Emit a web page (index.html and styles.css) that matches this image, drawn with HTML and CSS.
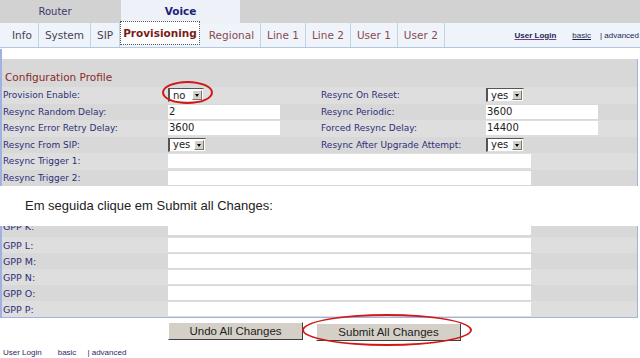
FILE: index.html
```html
<!DOCTYPE html>
<html lang="pt">
<head>
    <meta charset="UTF-8">
    <title>Provisioning</title>
    <link rel="stylesheet" href="styles.css">
</head>
<body>

    <!-- Main tabs -->
    <div class="main-tabs">
        <div class="main-tab">Router</div>
        <div class="main-tab active">Voice</div>
    </div>

    <!-- Sub tabs + mode links -->
    <div class="sub-bar">
        <nav class="sub-tabs">
            <span class="sub-tab dark">Info</span>
            <span class="sub-tab dark">System</span>
            <span class="sub-tab dark">SIP</span>
            <span class="sub-tab current">Provisioning</span>
            <span class="sub-tab">Regional</span>
            <span class="sub-tab">Line 1</span>
            <span class="sub-tab">Line 2</span>
            <span class="sub-tab">User 1</span>
            <span class="sub-tab">User 2</span>
        </nav>
        <div class="mode-links">
            <a href="#" class="login">User Login</a>
            <a href="#">basic</a>
            <span>| advanced</span>
        </div>
    </div>

    <div class="strip"></div>

    <section class="panel">
        <h3 class="section-title">Configuration Profile</h3>

        <div class="row">
            <label>Provision Enable:</label>
            <div class="cell">
                <span class="select narrow">no<i class="arrow"></i></span>
                <span class="ring ring-small"></span>
            </div>
            <label>Resync On Reset:</label>
            <div class="cell"><span class="select">yes<i class="arrow"></i></span></div>
        </div>
        <div class="row">
            <label>Resync Random Delay:</label>
            <div class="cell"><span class="field">2</span></div>
            <label>Resync Periodic:</label>
            <div class="cell"><span class="field">3600</span></div>
        </div>
        <div class="row">
            <label>Resync Error Retry Delay:</label>
            <div class="cell"><span class="field">3600</span></div>
            <label>Forced Resync Delay:</label>
            <div class="cell"><span class="field">14400</span></div>
        </div>
        <div class="row">
            <label>Resync From SIP:</label>
            <div class="cell"><span class="select">yes<i class="arrow"></i></span></div>
            <label>Resync After Upgrade Attempt:</label>
            <div class="cell"><span class="select">yes<i class="arrow"></i></span></div>
        </div>
        <div class="row wide">
            <label>Resync Trigger 1:</label>
            <div class="cell"><span class="field long"></span></div>
        </div>
        <div class="row wide">
            <label>Resync Trigger 2:</label>
            <div class="cell"><span class="field long"></span></div>
        </div>
    </section>

    <p class="caption">Em seguida clique em Submit all Changes:</p>

    <section class="panel bottom">
        <div class="row wide cut">
            <label>GPP K:</label>
            <div class="cell"><span class="field long"></span></div>
        </div>
        <div class="row wide">
            <label>GPP L:</label>
            <div class="cell"><span class="field long"></span></div>
        </div>
        <div class="row wide">
            <label>GPP M:</label>
            <div class="cell"><span class="field long"></span></div>
        </div>
        <div class="row wide">
            <label>GPP N:</label>
            <div class="cell"><span class="field long"></span></div>
        </div>
        <div class="row wide">
            <label>GPP O:</label>
            <div class="cell"><span class="field long"></span></div>
        </div>
        <div class="row wide">
            <label>GPP P:</label>
            <div class="cell"><span class="field long"></span></div>
        </div>
    </section>

    <div class="actions">
        <button class="btn undo">Undo All Changes</button>
        <div class="submit-wrap">
            <button class="btn submit">Submit All Changes</button>
            <span class="ring ring-big"></span>
        </div>
    </div>

    <footer class="foot-links">
        <a href="#" class="login">User Login</a>
        <a href="#">basic</a>
        <span>| advanced</span>
    </footer>

</body>
</html>
```

FILE: styles.css
```css
body {
    margin: 0;
    width: 640px;
    height: 358px;
    overflow: hidden;
    background: #fff;
    font-family: 'DejaVu Sans', Verdana, sans-serif;
    color: #2e2e78;
}

a {
    color: inherit;
}

/* main tabs */
.main-tabs {
    display: flex;
    height: 23px;
    background: #d2d2d2;
}

.main-tab {
    width: 110px;
    margin-right: 11px;
    line-height: 23px;
    text-align: center;
    font-size: 10px;
    color: #3a3a6e;
}

.main-tab.active {
    width: 119px;
    background: #eef2f8;
    font-weight: bold;
    color: #1e1e7a;
    font-size: 10.5px;
}

/* sub tabs */
.sub-bar {
    display: flex;
    justify-content: space-between;
    align-items: center;
    height: 24px;
    background: #eef4fa;
    border-bottom: 1px solid #b4c8e2;
}

.sub-tabs {
    display: flex;
    align-items: stretch;
    height: 24px;
    padding-left: 6px;
}

.sub-tab {
    display: flex;
    align-items: center;
    padding: 0 6px;
    font-size: 10.5px;
    color: #8a4a52;
    border-right: 1px solid #bfd2e6;
}

.sub-tab.dark {
    color: #4a3e56;
}

.sub-tab.current {
    margin: -2px 3px 2px 0;
    padding: 0 2px;
    background: #fff;
    border: 1px dotted #555;
    font-weight: bold;
    color: #7a1a1a;
    font-size: 10.5px;
}

.mode-links {
    display: flex;
    gap: 9px;
    font-family: 'Liberation Sans', Arial, sans-serif;
    font-size: 8px;
    color: #1f1f50;
    padding-right: 1px;
}

.mode-links a.login {
    font-weight: bold;
    margin-right: 7px;
    text-decoration-color: #7a3a8a;
}

.strip {
    height: 10px;
    border-left: 2px solid #9fb2e0;
    margin-top: 1px;
}

/* panels */
.panel {
    background: #d8d8d8;
    border-left: 2px solid #9fb2e0;
    border-right: 1px solid #9fb2e0;
    width: 635px;
}

.section-title {
    margin: 0;
    padding: 12px 0 0 3px;
    height: 16px;
    font-size: 10.5px;
    font-weight: normal;
    color: #8a2a2a;
}

.row {
    display: grid;
    grid-template-columns: 166px 152px 166px 1fr;
    align-items: center;
    height: 16.5px;
    font-size: 9px;
}

.row:nth-child(even) {
    background: #dedede;
}

.row.wide {
    grid-template-columns: 166px 1fr;
}

.row label {
    padding-left: 1px;
    white-space: nowrap;
}

.cell {
    position: relative;
    display: flex;
    align-items: center;
}

.field {
    display: block;
    width: 112px;
    height: 14px;
    line-height: 14px;
    padding-left: 1px;
    background: #fff;
    font-size: 10px;
    color: #222;
    box-sizing: border-box;
}

.field.long {
    width: 363px;
}

.select {
    display: flex;
    align-items: center;
    justify-content: space-between;
    width: 38px;
    height: 14px;
    padding: 0 1px 0 3px;
    box-sizing: border-box;
    background: #fff;
    border-top: 1px solid #555;
    border-left: 2px solid #555;
    border-bottom: 1px solid #ddd;
    border-right: 1px solid #ddd;
    font-size: 10px;
    color: #222;
}

.select.narrow {
    width: 36px;
}

.arrow {
    position: relative;
    width: 10px;
    height: 10px;
    background: #d4d0c8;
    border: 1px solid;
    border-color: #fff #777 #777 #fff;
    box-sizing: border-box;
}

.arrow::after {
    content: "";
    position: absolute;
    left: 2px;
    top: 3px;
    border-left: 2.5px solid transparent;
    border-right: 2.5px solid transparent;
    border-top: 3px solid #000;
}

.ring {
    position: absolute;
    border: 2px solid #d01818;
    border-radius: 50%;
    pointer-events: none;
}

.ring-small {
    left: -6px;
    top: -7px;
    width: 47px;
    height: 19px;
}

.caption {
    margin: 0;
    height: 40px;
    line-height: 40px;
    padding-left: 25px;
    font-family: 'Liberation Sans', Arial, sans-serif;
    font-size: 13px;
    color: #222;
}

.panel.bottom {
    border-bottom: 1px solid #9fb2e0;
}

.panel.bottom .row {
    height: 16px;
    font-size: 9.5px;
}

.row.cut {
    height: 11px !important;
    overflow: hidden;
    align-items: start;
}

.row.cut .field {
    height: 9px;
}

.row.cut label {
    line-height: 16px;
    margin-top: -7px;
}

/* buttons */
.actions {
    display: flex;
    align-items: center;
    gap: 13px;
    padding: 3px 0 0 168px;
}

.btn {
    height: 18px;
    padding: 0;
    background: #d4d0c8;
    border: 1px solid;
    border-color: #fff #404040 #404040 #fff;
    font-family: 'Liberation Sans', Arial, sans-serif;
    font-size: 11.5px;
    color: #222;
}

.undo {
    width: 135px;
}

.submit {
    width: 145px;
}

.submit-wrap {
    position: relative;
}

.ring-big {
    left: -14px;
    top: -7px;
    width: 166px;
    height: 28px;
}

.foot-links {
    display: flex;
    gap: 11px;
    padding: 7px 0 0 3px;
    font-family: 'Liberation Sans', Arial, sans-serif;
    font-size: 8px;
    color: #2a2a60;
}

.foot-links a {
    text-decoration: none;
}

.foot-links a.login {
    margin-right: 5px;
}
```
